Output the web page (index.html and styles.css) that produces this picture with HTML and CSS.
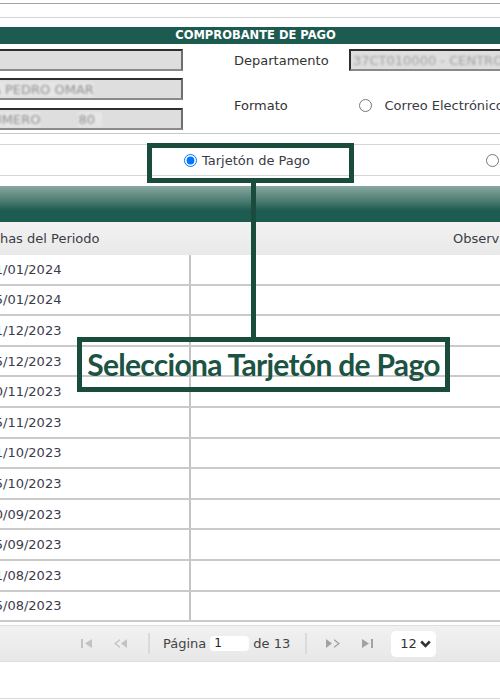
FILE: index.html
```html
<!DOCTYPE html>
<html lang="es">
<head>
<meta charset="utf-8">
<title>Comprobante de Pago</title>
<link rel="stylesheet" href="styles.css">
</head>
<body>
<div class="page">
  <div class="topstrip"></div>

  <section class="form">
    <div class="form-title">COMPROBANTE DE PAGO</div>
    <div class="form-body">
      <div class="col-inputs">
        <div class="field"></div>
        <div class="field"><span class="blur">A PEDRO OMAR</span></div>
        <div class="field"><span class="blur shift">NUMERO</span><span class="blur num">80</span></div>
      </div>
      <div class="col-right">
        <span class="lbl">Departamento</span>
        <div class="field field-wide"><span class="blur">37CT010000 - CENTRO</span></div>
        <span class="lbl">Formato</span>
        <label class="opt"><input type="radio" name="fmt"><span>Correo Electrónico</span></label>
      </div>
    </div>
  </section>

  <div class="radio-row">
    <label class="opt opt-main"><input type="radio" name="tipo" checked><span>Tarjetón de Pago</span></label>
    <label class="opt opt-other"><input type="radio" name="tipo"></label>
  </div>

  <div class="grid">
    <div class="grid-caption"></div>
    <div class="grid-head">
      <div class="c1">Fechas del Periodo</div>
      <div class="c2">Observaciones</div>
    </div>
    <div class="grid-rows">
      <div class="row"><div class="c1">31/01/2024</div><div class="c2"></div></div>
      <div class="row"><div class="c1">15/01/2024</div><div class="c2"></div></div>
      <div class="row"><div class="c1">31/12/2023</div><div class="c2"></div></div>
      <div class="row"><div class="c1">15/12/2023</div><div class="c2"></div></div>
      <div class="row"><div class="c1">30/11/2023</div><div class="c2"></div></div>
      <div class="row"><div class="c1">15/11/2023</div><div class="c2"></div></div>
      <div class="row"><div class="c1">31/10/2023</div><div class="c2"></div></div>
      <div class="row"><div class="c1">15/10/2023</div><div class="c2"></div></div>
      <div class="row"><div class="c1">30/09/2023</div><div class="c2"></div></div>
      <div class="row"><div class="c1">15/09/2023</div><div class="c2"></div></div>
      <div class="row"><div class="c1">31/08/2023</div><div class="c2"></div></div>
      <div class="row"><div class="c1">15/08/2023</div><div class="c2"></div></div>
    </div>
    <div class="pager">
      <svg class="pg pg-first" width="11" height="9" viewBox="0 0 11 9"><rect x="0" y="0" width="2" height="9"/><path d="M11 0 L4 4.5 L11 9 Z"/></svg>
      <svg class="pg pg-prev" width="13" height="9" viewBox="0 0 13 9"><path d="M6 0 L0 4.5 L6 9 L6 7.5 L2.2 4.5 L6 1.5 Z"/><path d="M13 0 L7 4.5 L13 9 Z"/></svg>
      <span class="sep sep1"></span>
      <span class="pg-text">Página</span>
      <span class="pg-input">1</span>
      <span class="pg-text pg-of">de 13</span>
      <span class="sep sep2"></span>
      <svg class="pg pg-next" width="14" height="9" viewBox="0 0 14 9"><path d="M0 0 L6 4.5 L0 9 Z"/><path d="M8 0 L14 4.5 L8 9 L8 7.5 L11.8 4.5 L8 1.5 Z"/></svg>
      <svg class="pg pg-last" width="11" height="9" viewBox="0 0 11 9"><path d="M0 0 L7 4.5 L0 9 Z"/><rect x="9" y="0" width="2" height="9"/></svg>
      <span class="pg-select">12<svg width="11" height="8" viewBox="0 0 11 8"><path d="M1.2 1.5 L5.5 5.8 L9.8 1.5" fill="none" stroke="#333" stroke-width="2.6"/></svg></span>
    </div>
  </div>
  <div class="foot"></div>

  <div class="callout callout-radio"></div>
  <div class="callout-line"></div>
  <div class="callout callout-text">Selecciona Tarjetón de Pago</div>
</div>
</body>
</html>
```
FILE: styles.css
```css
html, body {
  margin: 0;
  padding: 0;
  background: #fff;
}
.page {
  position: relative;
  width: 500px;
  height: 700px;
  overflow: hidden;
  font-family: "DejaVu Sans", Verdana, sans-serif;
  font-size: 13px;
  color: #3a3a44;
}
.topstrip {
  margin-top: 3px;
  height: 13px;
  border-top: 1px solid #a3a3a3;
  border-bottom: 1px solid #d6d6d6;
}
.form {
  margin-top: 9px;
}
.form-title {
  height: 17px;
  line-height: 17px;
  background: #1d5b50;
  color: #fff;
  font-weight: bold;
  font-size: 11.5px;
  text-align: center;
  padding-left: 11px;
}
.form-body {
  display: flex;
  padding: 5px 0 3px;
  border-bottom: 1px solid #c8c8c8;
}
.col-inputs {
  flex: none;
  width: 203px;
  margin-left: -20px;
  display: flex;
  flex-direction: column;
  gap: 7px;
}
.col-inputs .field:last-child {
  margin-top: 1px;
}
.field {
  box-sizing: border-box;
  height: 22px;
  background: #dedede;
  border-style: solid;
  border-width: 2px;
  border-color: #2e2e2e #6e6e6e #8a8a8a #2e2e2e;
  display: flex;
  align-items: center;
  padding-left: 10px;
  overflow: hidden;
  white-space: nowrap;
}
.blur {
  color: #8f8f8f;
  filter: blur(1.3px);
  background: #e6e6e6;
}
.shift {
  margin-left: -9.5px;
}
.num {
  margin-left: 38px;
  padding-right: 7px;
}
.col-right {
  margin-left: 51px;
  flex: none;
  width: 300px;
  display: grid;
  grid-template-columns: 115px 185px;
  grid-template-rows: 22px 20px;
  row-gap: 24px;
  align-items: center;
}
.lbl {
  color: #333;
}
.field-wide {
  width: 200px;
  padding-left: 2px;
}
.field-wide .blur {
  color: #a2a2a2;
  background: none;
}
.opt {
  display: flex;
  align-items: center;
  white-space: nowrap;
  color: #3a3a44;
}
.opt input {
  margin: 0;
  width: 13px;
  height: 13px;
  accent-color: #0075ff;
}
.col-right .opt {
  margin-left: 10px;
}
.col-right .opt span {
  margin-left: 12.5px;
}
.radio-row {
  margin-top: 10px;
  height: 30px;
  border-top: 1px solid #d6d6d6;
  border-bottom: 1px solid #d6d6d6;
  display: flex;
  align-items: center;
}
.opt-main {
  margin-left: 183.5px;
}
.opt-main span {
  margin-left: 5.5px;
}
.opt-other {
  margin-left: 176px;
}
.grid {
  margin-top: 10px;
  margin-left: -30px;
  width: 620px;
}
.grid-caption {
  height: 36px;
  background: linear-gradient(#88a8a0 0%, #4e7d73 40%, #1e5b50 68%, #1d5a4f 100%);
}
.grid-head {
  height: 33px;
  display: flex;
  align-items: center;
  background: linear-gradient(#f2f2f2, #e9e9e9);
  color: #3c3c46;
}
.grid-head .c1 {
  flex: none;
  width: 220px;
  padding-left: 8px;
  box-sizing: border-box;
}
.grid-head .c2 {
  flex: none;
  padding-left: 263px;
}
.row {
  box-sizing: border-box;
  height: 30.6px;
  display: flex;
  border-bottom: 2px solid #cacaca;
}
.row .c1 {
  flex: none;
  box-sizing: border-box;
  width: 221px;
  padding-left: 16.5px;
  border-right: 2px solid #c4c4c4;
  display: flex;
  align-items: center;
  color: #3c3c4c;
}
.row .c2 {
  flex: 1;
}
.pager {
  margin-top: 3px;
  height: 35px;
  border-top: 1px solid #dedede;
  border-bottom: 1px solid #dedede;
  background: linear-gradient(#f1f1f1, #e8e8e8);
  display: flex;
  align-items: center;
  padding-left: 30px;
  color: #444;
}
.pg {
  flex: none;
}
.pg-first, .pg-prev {
  fill: #c3c3c3;
}
.pg-next, .pg-last {
  fill: #a2a2a2;
}
.pg-first { margin-left: 81px; }
.pg-prev { margin-left: 22px; }
.sep {
  width: 2px;
  height: 21px;
  background: #dadada;
}
.sep1 { margin-left: 20.5px; }
.pg-text { margin-left: 13.5px; }
.pg-input {
  margin-left: 4px;
  box-sizing: border-box;
  width: 39px;
  height: 15px;
  line-height: 15px;
  background: #fff;
  border-radius: 4px;
  padding-left: 4px;
  font-size: 12px;
  color: #222;
}
.pg-of { margin-left: 4px; }
.sep2 { margin-left: 15px; }
.pg-next { margin-left: 19px; }
.pg-last { margin-left: 22px; }
.pg-select {
  margin-left: 18px;
  box-sizing: border-box;
  width: 45px;
  height: 26px;
  background: #fff;
  border-radius: 5px;
  display: flex;
  align-items: center;
  padding-left: 9px;
  gap: 3px;
  color: #333;
}
.foot {
  margin-top: 36px;
  border-top: 1px solid #d8d8d8;
}
.callout {
  position: absolute;
  box-sizing: border-box;
  border: 5px solid #194c3d;
}
.callout-radio {
  left: 147px;
  top: 143px;
  width: 207px;
  height: 40px;
}
.callout-line {
  position: absolute;
  left: 251px;
  top: 183px;
  width: 5px;
  height: 155px;
  background: #194c3d;
}
.callout-text {
  left: 77px;
  top: 337px;
  width: 373px;
  height: 55px;
  display: flex;
  align-items: center;
  justify-content: center;
  font-family: Lato, "Open Sans", sans-serif;
  font-weight: 700;
  font-size: 30px;
  letter-spacing: -0.7px;
  color: #1c5343;
  padding-bottom: 2px;
}
```
